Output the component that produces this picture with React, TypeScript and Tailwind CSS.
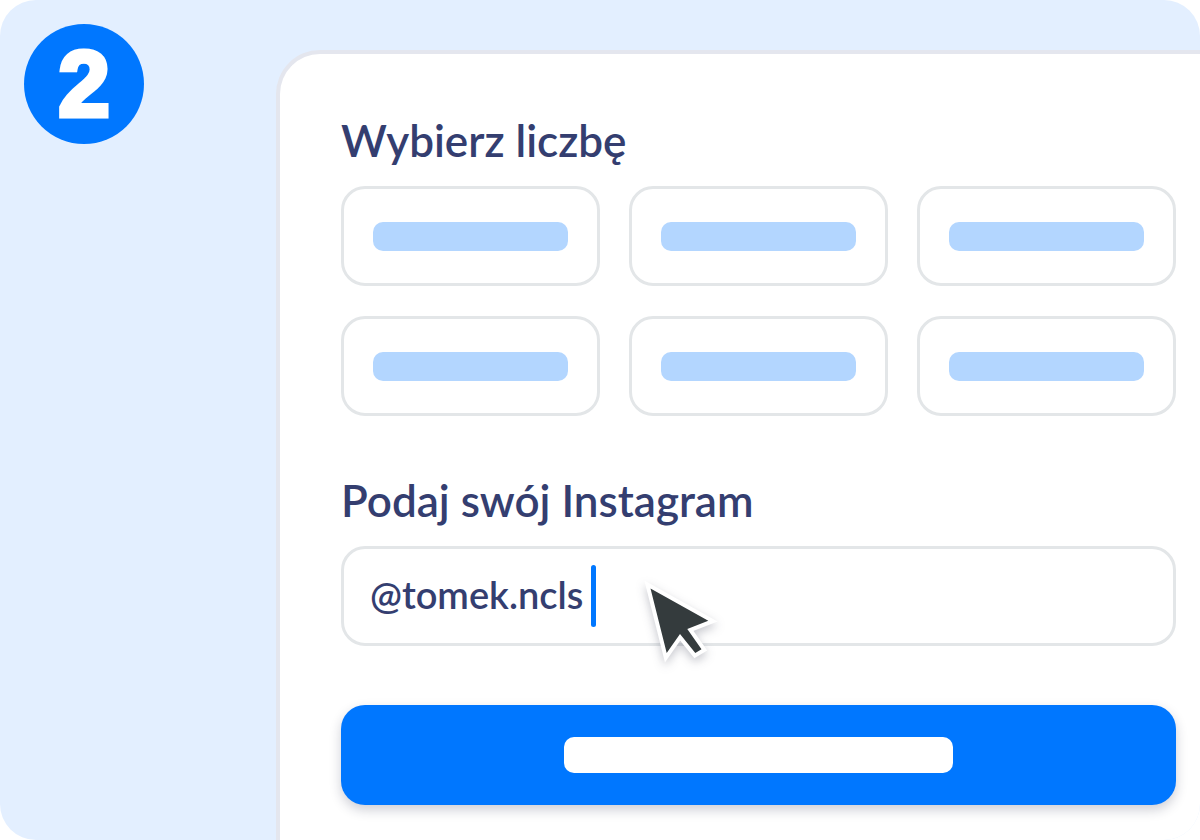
import React, { useState } from 'react';

const amounts = [1, 2, 3, 4, 5, 6];

const Pointer: React.FC = () => (
  <svg
    className="absolute top-8 left-72 pointer-events-none drop-shadow-[0_4px_5px_rgba(30,35,60,0.25)]"
    width="100"
    height="100"
    viewBox="632 581 100 100"
    aria-hidden="true"
  >
    <path
      d="M650.5 588.5 L708.3 620.8 L687.3 629 L701.5 649.3 L695.3 653 L680 634 L666.7 653 Z"
      fill="#343b3d"
      stroke="#ffffff"
      strokeWidth="8"
      strokeMiterlimit="6"
      paintOrder="stroke"
    />
  </svg>
);

const App: React.FC = () => {
  const [profile, setProfile] = useState('@tomek.ncls');

  return (
    <main className="flex min-h-screen overflow-hidden rounded-[36px] bg-[#e3efff] font-['Lato',sans-serif] text-[#343e70]">
      {/* Step number */}
      <div className="w-[23%] shrink-0 p-6">
        <div className="flex size-[120px] items-center justify-center rounded-full bg-[#0077ff] font-['Liberation_Sans',sans-serif] text-[92px] leading-none font-bold text-white [-webkit-text-stroke:5px_white]">
          2
        </div>
      </div>

      {/* Order form */}
      <form
        className="mt-[50px] flex-1 rounded-tl-[44px] border-t-4 border-l-4 border-[#e4e6ee] bg-white pt-[62px] pr-6 pb-8 pl-[61px]"
        onSubmit={(e) => e.preventDefault()}
      >
        <h2 className="mb-[22px] text-[44px] leading-12 font-semibold">Wybierz liczbę</h2>
        <div className="grid grid-cols-3 gap-x-[29px] gap-y-[30px]">
          {amounts.map((n) => (
            <button
              key={n}
              type="button"
              aria-label={`Pakiet ${n}`}
              className="flex h-[100px] items-center rounded-3xl border-[3px] border-[#e3e6e8] px-[29px]"
            >
              <span className="h-[29px] w-full rounded-[10px] bg-[#b3d6ff]" />
            </button>
          ))}
        </div>

        <label htmlFor="profile" className="mt-[60px] mb-[22px] block text-[44px] leading-12 font-semibold">
          Podaj swój Instagram
        </label>
        <div className="relative flex h-[100px] items-center gap-2 rounded-3xl border-[3px] border-[#e3e6e8] px-[26px]">
          <input
            id="profile"
            type="text"
            value={profile}
            onChange={(e) => setProfile(e.target.value)}
            className="field-sizing-content pb-1 text-[38px] font-semibold caret-transparent outline-none"
          />
          <span className="h-[62px] w-[5px] rounded-full bg-[#0077ff]" />
          <Pointer />
        </div>

        <button
          type="submit"
          aria-label="Dalej"
          className="mt-[59px] flex h-[100px] w-full items-center justify-center rounded-3xl bg-[#0077ff] shadow-[0_5px_12px_rgba(30,35,70,0.22)]"
        >
          <span className="h-9 w-[389px] rounded-[10px] bg-white" />
        </button>
      </form>
    </main>
  );
};

export default App;
